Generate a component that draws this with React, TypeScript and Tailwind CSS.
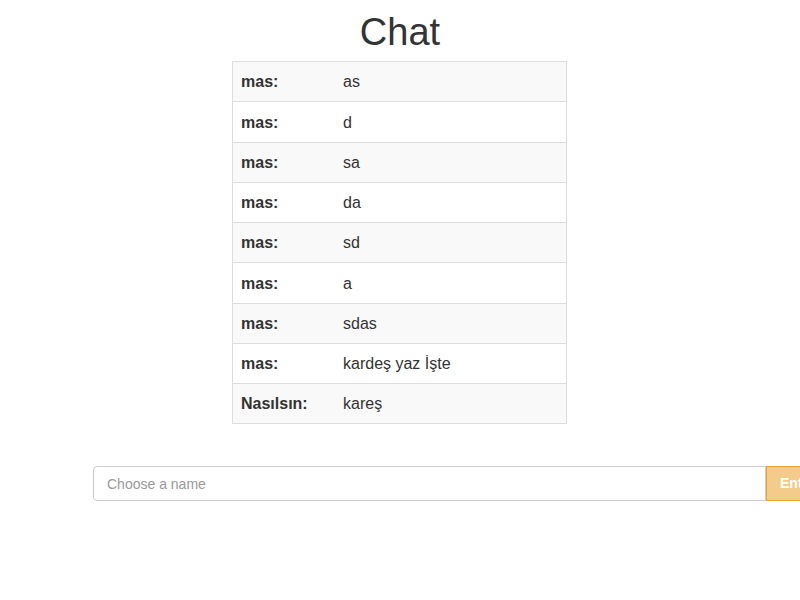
import React from "react";

const messages: [string, string][] = [
  ["mas:", "as"],
  ["mas:", "d"],
  ["mas:", "sa"],
  ["mas:", "da"],
  ["mas:", "sd"],
  ["mas:", "a"],
  ["mas:", "sdas"],
  ["mas:", "kardeş yaz İşte"],
  ["Nasılsın:", "kareş"],
];

// alturas de fila (con borde) tal como se ven en la captura
const rowHeights = [
  "h-[39px]",
  "h-[41px]",
  "h-[40px]",
  "h-[40px]",
  "h-[40px]",
  "h-[41px]",
  "h-[40px]",
  "h-[40px]",
  "h-[40px]",
];

export default function App() {
  return (
    <div className="w-[800px] h-[600px] overflow-hidden bg-white text-[#333] font-['Liberation_Sans',Arial,sans-serif]">
      <h1 className="mt-[11px] mb-[8px] text-center text-[38px] leading-[42px]">Chat</h1>

      {/* tabla de mensajes */}
      <div className="ml-[232px] w-[335px] border border-[#ddd]">
        {messages.map(([user, text], i) => (
          <div
            key={i}
            className={
              "flex items-center pt-[1px] text-[16px] " +
              rowHeights[i] +
              " " +
              (i > 0 ? "border-t border-[#ddd] " : "") +
              (i % 2 === 0 ? "bg-[#f9f9f9]" : "bg-white")
            }
          >
            <div className="w-[110px] pl-[8px] font-bold">{user}</div>
            <div>{text}</div>
          </div>
        ))}
      </div>

      {/* input */}
      <div className="mt-[42px] ml-[93px] flex w-[800px] h-[35px]">
        <input
          className="w-[673px] h-full rounded-l-[4px] border border-[#ccc] px-[13px] text-[14px] outline-none placeholder:text-[#999]"
          placeholder="Choose a name"
        />
        <button className="h-full shrink-0 border border-[#eea236] bg-[#f3cb8a] px-[13px] text-[14px] font-bold text-white">
          Enter
        </button>
      </div>
    </div>
  );
}
